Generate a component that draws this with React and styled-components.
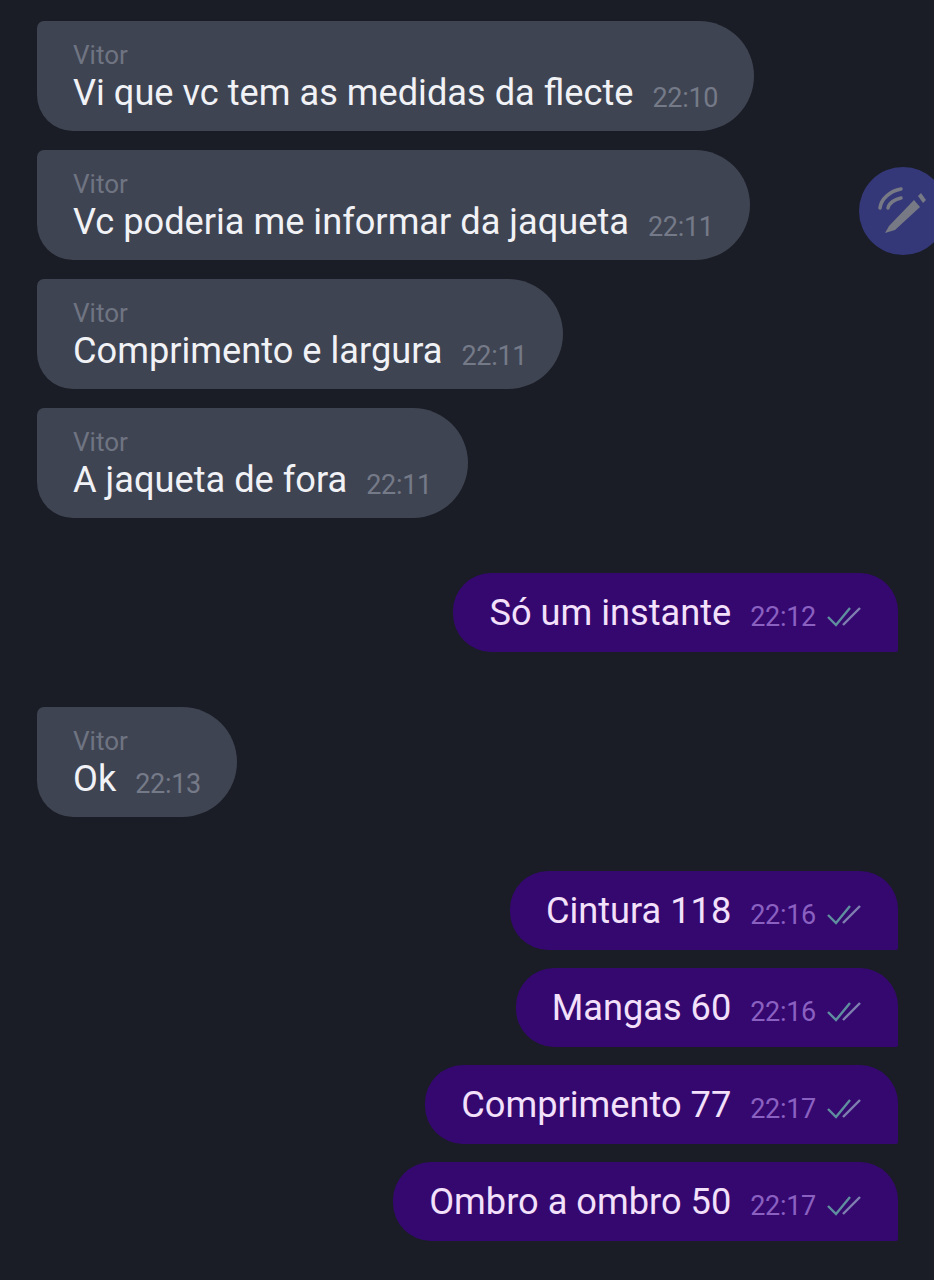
import React from 'react'
import styled, { createGlobalStyle } from 'styled-components'

const Global = createGlobalStyle`
    html, body {
        margin: 0;
        padding: 0;
        background: #1a1d25;
    }
`;

const Page = styled.div`
    position: relative;
    width: 934px;
    height: 1280px;
    box-sizing: border-box;
    padding: 21px 36px 0 37px;
    background: #1a1d25;
    font-family: Roboto, "Liberation Sans", sans-serif;
    display: flex;
    flex-direction: column;
    overflow: hidden;
`;

const In = styled.div`
    align-self: flex-start;
    box-sizing: border-box;
    height: 110px;
    padding: 19px 36px 0 36px;
    margin-top: ${props => props.$top}px;
    background: #3f4452;
    border-radius: 7px 55px 55px 36px;
`;

const Out = styled.div`
    align-self: flex-end;
    box-sizing: border-box;
    height: 79px;
    padding: 17px 36px 0;
    margin-top: ${props => props.$top}px;
    background: #350870;
    border-radius: 38px 38px 2px 38px;
    display: flex;
    align-items: baseline;
    line-height: 46px;
`;

const Name = styled.div`
    font-size: 26px;
    line-height: 30px;
    color: #6f7482;
`;

const Row = styled.div`
    display: flex;
    align-items: baseline;
    height: 46px;
    line-height: 46px;
`;

const Text = styled.span`
    font-size: 36.2px;
    color: #f1f2f6;
    white-space: nowrap;
`;

const OutText = styled(Text)`
    color: #f3e0fa;
`;

const Time = styled.span`
    font-size: 27px;
    letter-spacing: -0.3px;
    color: #757a88;
    margin-left: 19px;
    position: relative;
    top: 2px;
    white-space: nowrap;
`;

const OutTime = styled(Time)`
    color: #8a60c0;
    top: 1px;
    margin-right: 11px;
`;

const CheckMark = styled.svg`
    align-self: center;
    position: relative;
    top: -4px;
`;

const Fab = styled.div`
    position: absolute;
    left: 859px;
    top: 167px;
    width: 88px;
    height: 88px;
    border-radius: 50%;
    background: #343878;
`;

const Checks = () => <CheckMark width="35" height="22" viewBox="0 0 35 22" fill="none" strokeWidth="2.4">
    <path d="M1 11 L9 19 L23 2" stroke="#5f8f9e"/>
    <path d="M16 19 L33 2" stroke="#7f7fb0"/>
</CheckMark>;

const Pencil = () => <svg width="88" height="88" viewBox="0 0 88 88" fill="none">
    <path d="M26 66 L30 59 L55 33 L61 40 L36 63 Z" fill="#777985"/>
    <path d="M59 29 L62 26 L67 33 L64 36 Z" fill="#777985"/>
    <path d="M21 41 C22 32 31 24 42 22" stroke="#777985" strokeWidth="3.5" strokeLinecap="round"/>
    <path d="M29 41 C30 36 36 32 42 31" stroke="#777985" strokeWidth="3.5" strokeLinecap="round"/>
</svg>;

const Incoming = ({ text, time, top }) => <In $top={top}>
    <Name>Vitor</Name>
    <Row><Text>{text}</Text><Time>{time}</Time></Row>
</In>;

const Outgoing = ({ text, time, top }) => <Out $top={top}>
    <OutText>{text}</OutText>
    <OutTime>{time}</OutTime>
    <Checks />
</Out>;

const App = () => {
    return <Page>
        <Global />
        <Incoming top={0} text="Vi que vc tem as medidas da flecte" time="22:10" />
        <Incoming top={19} text="Vc poderia me informar da jaqueta" time="22:11" />
        <Incoming top={19} text="Comprimento e largura" time="22:11" />
        <Incoming top={19} text="A jaqueta de fora" time="22:11" />
        <Outgoing top={55} text="Só um instante" time="22:12" />
        <Incoming top={55} text="Ok" time="22:13" />
        <Outgoing top={54} text="Cintura 118" time="22:16" />
        <Outgoing top={18} text="Mangas 60" time="22:16" />
        <Outgoing top={18} text="Comprimento 77" time="22:17" />
        <Outgoing top={18} text="Ombro a ombro 50" time="22:17" />
        <Fab><Pencil /></Fab>
    </Page>
}

export default App
